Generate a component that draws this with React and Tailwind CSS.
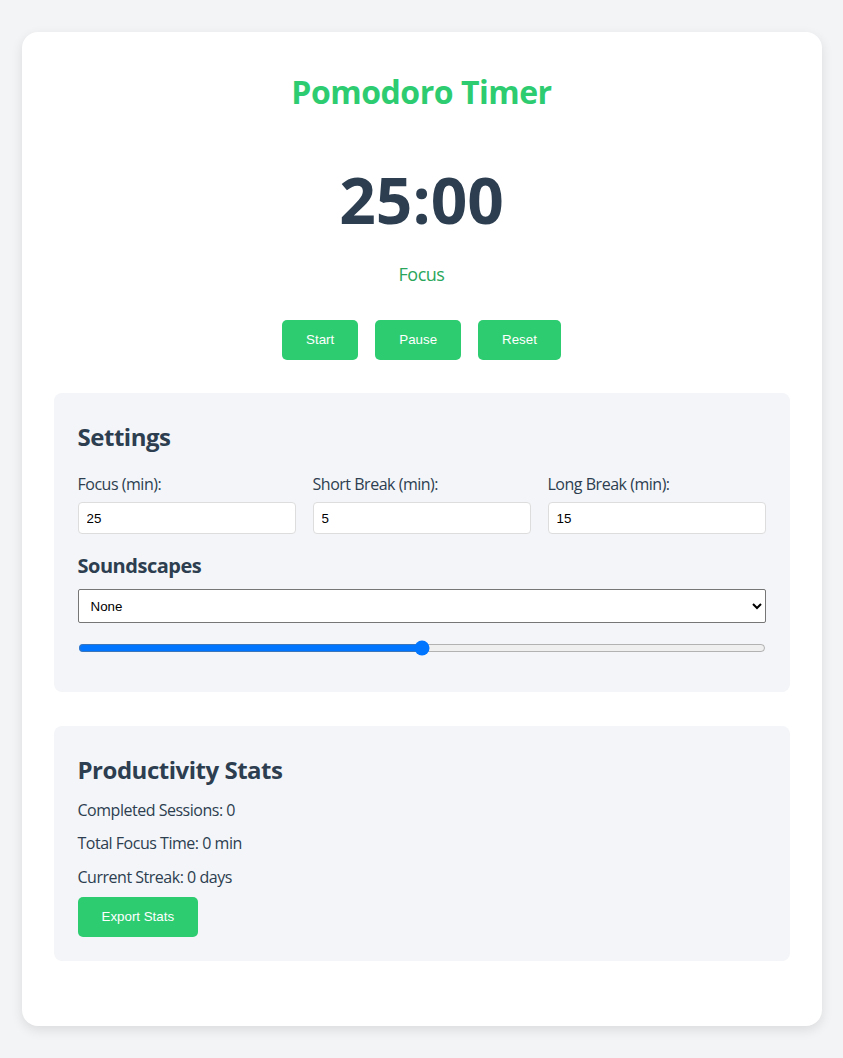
import React from "react";

const sans = "font-['Open_Sans','Noto_Sans',sans-serif] tracking-[-0.03em]";
const btn =
  "font-['Liberation_Sans',Arial,sans-serif] tracking-normal text-[13.33px] leading-[16px] text-white bg-[#2ecc71] rounded-[5px] px-[24px] h-[40px]";

export default function App() {
  return (
    <div className={`min-h-screen bg-[#f3f4f6] py-[32px] ${sans}`}>
      <div className="w-[800px] mx-auto bg-white rounded-[16px] shadow-[0_4px_12px_rgba(0,0,0,0.1)] p-[32px] pb-[65px]">
        <h1 className="text-center text-[32px] leading-[40px] font-bold text-[#2ecc71] mt-[8px]">
          Pomodoro Timer
        </h1>
        <div className="text-center text-[64px] leading-[80px] font-bold tracking-normal text-[#2c3e50] mt-[48px]">
          25:00
        </div>
        <div className="text-center text-[18px] leading-[24px] text-[#29a65b] mt-[22px]">
          Focus
        </div>
        <div className="flex justify-center gap-[17px] mt-[34px]">
          <button className={btn}>Start</button>
          <button className={btn}>Pause</button>
          <button className={btn}>Reset</button>
        </div>

        <div className="mt-[33px] bg-[#f4f5f8] rounded-[8px] px-[24px] pt-[24px] pb-[36px]">
          <h2 className="text-[24px] leading-[40px] font-bold text-[#2c3e50]">Settings</h2>
          <div className="grid grid-cols-3 gap-[17px] mt-[15px]">
            {[
              ["Focus (min):", "25"],
              ["Short Break (min):", "5"],
              ["Long Break (min):", "15"],
            ].map(([l, v]) => (
              <div key={l}>
                <div className="text-[16px] leading-[24px] text-[#2c3e50]">{l}</div>
                <input
                  defaultValue={v}
                  className="mt-[6px] w-full h-[32px] bg-white border border-[#dddddd] rounded-[4px] px-[8px] font-['Liberation_Sans',Arial,sans-serif] tracking-normal text-[13.33px] text-black"
                />
              </div>
            ))}
          </div>
          <h3 className="text-[20px] leading-[28px] font-bold text-[#2c3e50] mt-[18px]">Soundscapes</h3>
          <select className="mt-[9px] w-full h-[34px] bg-white border border-[#767676] rounded-[2px] px-[8px] font-['Liberation_Sans',Arial,sans-serif] tracking-normal text-[13.33px] text-black">
            <option>None</option>
            <option>Rain</option>
            <option>Forest</option>
          </select>
          <input type="range" defaultValue={50} className="mt-[17px] w-full h-[16px] block" />
        </div>

        <div className="mt-[34px] bg-[#f4f5f8] rounded-[8px] p-[24px]">
          <h2 className="text-[24px] leading-[40px] font-bold text-[#2c3e50]">Productivity Stats</h2>
          <p className="text-[16px] leading-[24px] text-[#2c3e50] mt-[8px]">Completed Sessions: 0</p>
          <p className="text-[16px] leading-[24px] text-[#2c3e50] mt-[9px]">Total Focus Time: 0 min</p>
          <p className="text-[16px] leading-[24px] text-[#2c3e50] mt-[10px]">Current Streak: 0 days</p>
          <button className={`${btn} mt-[8px]`}>Export Stats</button>
        </div>
      </div>
    </div>
  );
}
